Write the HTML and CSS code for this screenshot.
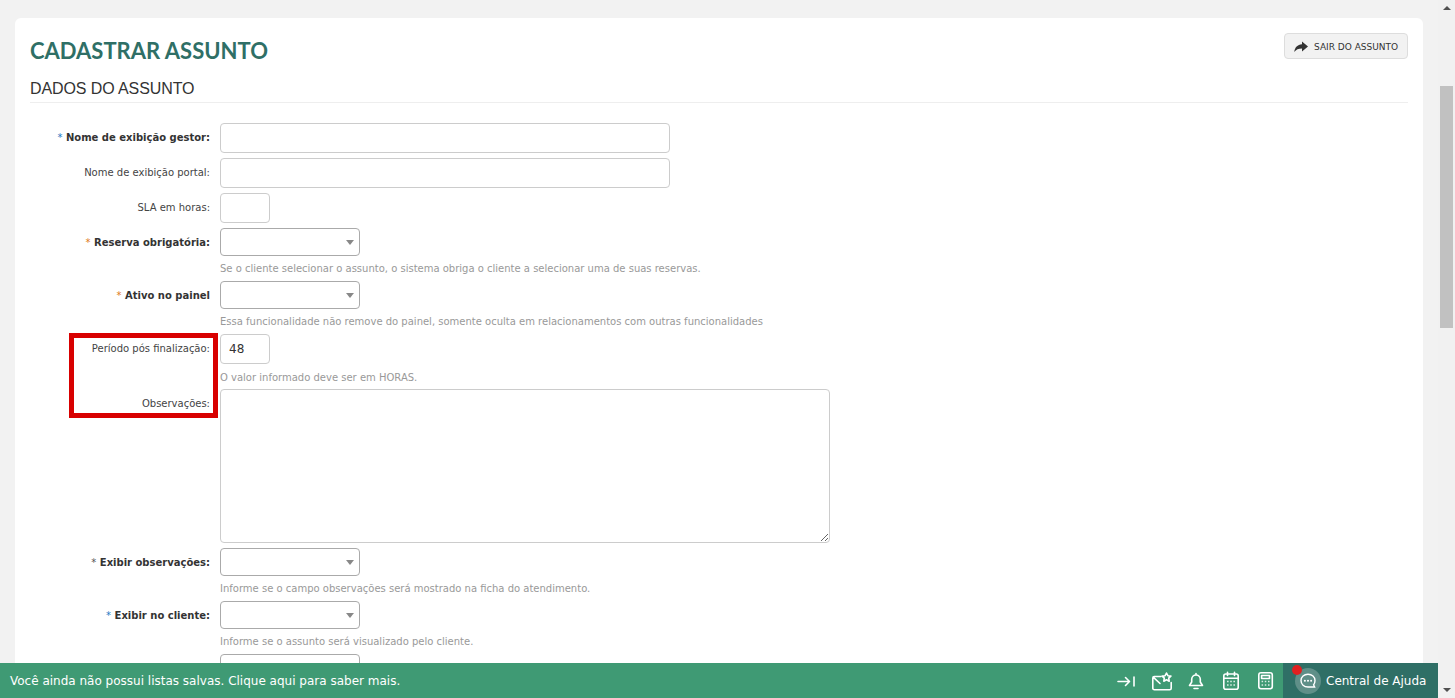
FILE: index.html
```html
<!DOCTYPE html>
<html lang="pt-BR">
<head>
<meta charset="utf-8">
<title>Cadastrar assunto</title>
<link rel="stylesheet" href="styles.css">
</head>
<body>
<div class="viewport">
  <main class="page">
    <section class="card">
      <header class="head">
        <h1 class="title">CADASTRAR ASSUNTO</h1>
        <button class="exit" type="button">
          <svg class="exit-icon" viewBox="0 0 14 12" width="14" height="12"><path d="M8 0.5 L14 5.5 L8 10.5 V7.5 C4.5 7.5 2 8.5 0.3 11 C0.8 6.5 3.5 3.6 8 3.3 Z" fill="#333"/></svg>
          SAIR DO ASSUNTO
        </button>
      </header>
      <h2 class="section">DADOS DO ASSUNTO</h2>
      <form class="form">
        <div class="row">
          <label class="label req"><span class="star blue">*</span> Nome de exibição gestor:</label>
          <div class="field"><input class="input wide" type="text"></div>
        </div>
        <div class="row">
          <label class="label">Nome de exibição portal:</label>
          <div class="field"><input class="input wide" type="text"></div>
        </div>
        <div class="row">
          <label class="label">SLA em horas:</label>
          <div class="field"><input class="input small" type="text"></div>
        </div>
        <div class="row">
          <label class="label req"><span class="star orange">*</span> Reserva obrigatória:</label>
          <div class="field"><div class="select"></div><p class="hint">Se o cliente selecionar o assunto, o sistema obriga o cliente a selecionar uma de suas reservas.</p></div>
        </div>
        <div class="row">
          <label class="label req"><span class="star orange">*</span> Ativo no painel</label>
          <div class="field"><div class="select"></div><p class="hint">Essa funcionalidade não remove do painel, somente oculta em relacionamentos com outras funcionalidades</p></div>
        </div>
        <div class="row">
          <label class="label">Período pós finalização:</label>
          <div class="field"><input class="input small" type="text" value="48"><p class="hint">O valor informado deve ser em HORAS.</p></div>
        </div>
        <div class="row">
          <label class="label">Observações:</label>
          <div class="field"><textarea class="area"></textarea></div>
        </div>
        <div class="row">
          <label class="label req"><span class="star gray">*</span> Exibir observações:</label>
          <div class="field"><div class="select"></div><p class="hint">Informe se o campo observações será mostrado na ficha do atendimento.</p></div>
        </div>
        <div class="row">
          <label class="label req"><span class="star blue">*</span> Exibir no cliente:</label>
          <div class="field"><div class="select"></div><p class="hint">Informe se o assunto será visualizado pelo cliente.</p></div>
        </div>
        <div class="row">
          <label class="label req"></label>
          <div class="field"><div class="select"></div></div>
        </div>
      </form>
      <div class="highlight"></div>
    </section>
  </main>
  <div class="scrollbar">
    <span class="sb-up"></span>
    <span class="sb-thumb"></span>
    <span class="sb-down"></span>
  </div>
  <footer class="bar">
    <span class="bar-text">Você ainda não possui listas salvas. Clique aqui para saber mais.</span>
    <div class="bar-icons">
      <svg class="ic" width="19" height="21" viewBox="0 0 19 21"><path d="M1 11.5H12.5M8.5 7.5 12.5 11.5 8.5 15.5M17 7V16"/></svg>
      <svg class="ic" width="20" height="21" viewBox="0 0 20 21"><path d="M9 6.5H2.3A1.5 1.5 0 0 0 .8 8V18.2A1.5 1.5 0 0 0 2.3 19.7H17.7A1.5 1.5 0 0 0 19.2 18.2V12.5M1.2 7.2 8 13.5"/><path d="M14.5 3 15.9 5.7 18.9 6.1 16.7 8.2 17.2 11.2 14.5 9.8 11.8 11.2 12.3 8.2 10.1 6.1 13.1 5.7Z"/></svg>
      <svg class="ic" width="18" height="21" viewBox="0 0 18 21"><path d="M8 5A4.3 4.3 0 0 0 3.7 9.3V12L1.5 15.5H14.5L12.3 12V9.3A4.3 4.3 0 0 0 8 5ZM8 3.5V5M6 18.5H10"/></svg>
      <svg class="ic" width="18" height="21" viewBox="0 0 18 21"><rect x="1.8" y="4" width="14.4" height="15.2" rx="2"/><path d="M1.8 8.2H16.2M5.5 2.3V5.5M12.5 2.3V5.5"/><path class="dots" d="M5 11.5h1.6M8.2 11.5h1.6M11.4 11.5h1.6M5 15h1.6M8.2 15h1.6M11.4 15h1.6"/></svg>
      <svg class="ic" width="18" height="21" viewBox="0 0 18 21"><rect x="2.8" y="2.8" width="13.5" height="16" rx="2.2"/><rect x="5.6" y="5.5" width="7.9" height="3"/><path class="dots" d="M5.6 11.5h1.5M8.8 11.5h1.5M12 11.5h1.5M5.6 15h1.5M8.8 15h1.5M12 15h1.5"/></svg>
    </div>
    <div class="help">
      <span class="help-badge">
        <svg class="help-icon" width="16" height="16" viewBox="0 0 16 16"><path d="M8 1.2C4 1.2 1 3.9 1 7.6S4 14 8 14H14.6L13.6 11.8C14.5 10.7 15 9.2 15 7.6 15 3.9 12 1.2 8 1.2Z"/><circle class="dot" cx="4.9" cy="7.7" r="1"/><circle class="dot" cx="8" cy="7.7" r="1"/><circle class="dot" cx="11.1" cy="7.7" r="1"/></svg>
        <span class="help-alert"></span>
      </span>
      <span class="help-text">Central de Ajuda</span>
    </div>
  </footer>
</div>
</body>
</html>
```
FILE: styles.css
```css
* { box-sizing: border-box; }
html, body { margin: 0; height: 100%; overflow: hidden; }
body { background: #f2f2f2; font-family: "DejaVu Sans", Verdana, sans-serif; color: #333; }
.viewport { position: relative; display: flex; height: 698px; overflow: hidden; }
.page { flex: 1; min-width: 0; padding: 18px 15px 0; overflow: hidden; }
.card { position: relative; background: #fff; border-radius: 6px; padding: 15px 15px 0; height: 800px; }
.head { display: flex; justify-content: space-between; align-items: flex-start; height: 38px; }
.title { margin: 0; padding-top: 3px; font: 700 22px/30px Lato, sans-serif; color: #2f6f66; }
.exit { display: flex; align-items: center; gap: 6px; width: 124px; height: 26px; padding: 1px 0 0 9px; border: 1px solid #ddd; border-radius: 4px; background: #f2f2f2; font: 9px "DejaVu Sans", sans-serif; color: #333; white-space: nowrap; }
.exit-icon { flex: none; }
.section { margin: 0 0 20px; height: 32px; border-bottom: 1px solid #eee; padding-top: 9px; font: 400 16px/18px "Liberation Sans", sans-serif; letter-spacing: -0.1px; color: #333; }
.form { display: flex; flex-direction: column; gap: 5px; }
.row { display: flex; align-items: flex-start; }
.label { flex: none; width: 180px; margin: 0 10px 0 0; padding-top: 8px; text-align: right; font-size: 10px; line-height: 13px; color: #444; white-space: nowrap; }
.label.req { font-weight: 700; color: #333; }
.star { font-weight: 400; }
.blue { color: #1f7ac4; }
.orange { color: #e07b1a; }
.gray { color: #555; }
.field { display: flex; flex-direction: column; align-items: flex-start; }
.input { display: block; height: 30px; border: 1px solid #ccc; border-radius: 4px; background: #fff; padding: 0 8px; font: 12px "DejaVu Sans", sans-serif; color: #333; outline: none; }
.wide { width: 450px; }
.small { width: 50px; }
.select { position: relative; width: 140px; height: 28px; border: 1px solid #aaa; border-radius: 4px; background: #fff; }
.select::after { content: ""; position: absolute; right: 5px; top: 11px; border-left: 4px solid transparent; border-right: 4px solid transparent; border-top: 5px solid #888; }
.hint { margin: 0; height: 20px; padding-top: 6px; font-size: 10px; line-height: 13px; color: #999; white-space: nowrap; }
.input + .hint { padding-top: 7px; }
.area { display: block; width: 610px; height: 154px; border: 1px solid #ccc; border-radius: 4px; background: #fff; outline: none; resize: both; }
.highlight { position: absolute; left: 54px; top: 315px; width: 149px; height: 85px; border: 5px solid #d80000; pointer-events: none; }
.scrollbar { flex: none; width: 17px; background: #f1f1f1; display: flex; flex-direction: column; align-items: center; position: relative; }
.sb-up { margin-top: 6px; border-left: 4px solid transparent; border-right: 4px solid transparent; border-bottom: 4px solid #505050; }
.sb-thumb { position: absolute; top: 86px; left: 2px; width: 13px; height: 242px; background: #c1c1c1; }
.sb-down { position: absolute; bottom: 6px; border-left: 4px solid transparent; border-right: 4px solid transparent; border-top: 4px solid #505050; }
.bar { position: absolute; left: 0; right: 17px; bottom: 0; height: 35px; display: flex; align-items: center; background: #3f9a74; color: #fff; }
.bar-text { flex: 1; padding-left: 10px; font-size: 12px; white-space: nowrap; }
.bar-icons { display: flex; align-items: center; gap: 16px; padding-right: 9px; }
.ic { display: block; fill: none; stroke: #fff; stroke-width: 1.6; stroke-linecap: round; stroke-linejoin: round; }
.ic .dots { stroke-width: 1.3; stroke-linecap: butt; opacity: .8; }
.help { flex: none; width: 155px; height: 35px; display: flex; align-items: center; gap: 5px; padding-left: 12px; background: #2f6f66; }
.help-badge { position: relative; display: flex; align-items: center; justify-content: center; width: 26px; height: 26px; border-radius: 50%; background: #5f8f88; }
.help-icon { fill: none; stroke: #fff; stroke-width: 1.4; }
.help-icon .dot { fill: #fff; stroke: none; }
.help-alert { position: absolute; left: -3px; top: -3px; width: 10px; height: 10px; border-radius: 50%; background: #e02020; }
.help-text { font-size: 12px; white-space: nowrap; }
```
